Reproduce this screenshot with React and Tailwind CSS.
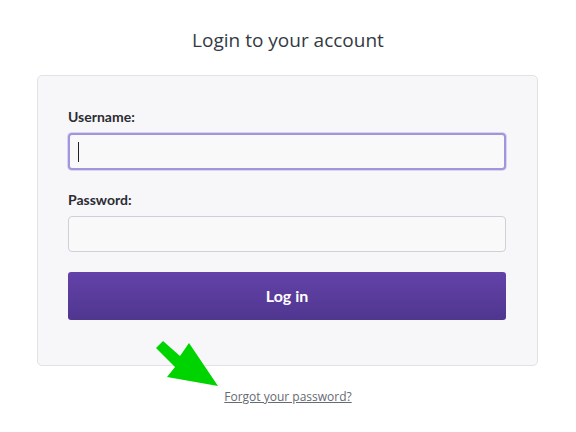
export default function App() {
  return (
    <div className="min-h-screen bg-white relative">
      <div className="pt-[26px] text-center text-[19px] leading-[28px] text-[#333a44]" style={{ fontFamily: '"Open Sans", sans-serif' }}>
        Login to your account
      </div>
      <div className="ml-[37px] mt-[21px] w-[501px] h-[291px] rounded-[5px] border border-[#e2e2e6] bg-[#f7f7f9] pl-[30px] pr-[31px] pt-[31px]" style={{ fontFamily: 'Lato, sans-serif' }}>
        <div className="text-[14px] font-bold leading-[20px] text-[#2b2b33]">Username:</div>
        <div className="mt-[6px] h-[37px] rounded-[4px] border-2 border-[#a096db] bg-[#f9f9fa] shadow-[0_0_0_1px_#d9d4f2] flex items-center pl-[8px]">
          <div className="w-px h-[20px] bg-[#222]" />
        </div>
        <div className="mt-[20px] text-[14px] font-bold leading-[20px] text-[#2b2b33]">Password:</div>
        <div className="mt-[6px] h-[36px] rounded-[4px] border border-[#cfd0d7] bg-[#f9f9fa]" />
        <button className="mt-[20px] w-full h-[48px] rounded-[3px] bg-gradient-to-b from-[#6442a9] to-[#4f368f] text-white text-[16px] font-bold">
          Log in
        </button>
      </div>
      <div className="mt-[23px] text-center text-[12px] leading-[16px]" style={{ fontFamily: '"Open Sans", sans-serif' }}>
        <a className="text-[#666a72] underline">Forgot your password?</a>
      </div>
      <svg className="absolute left-0 top-0" width="576" height="432" style={{ pointerEvents: 'none' }}>
        <polygon points="163,341 180,356 189,343 218,386 167,377 175,367 156,348" fill="#00d400" />
      </svg>
    </div>
  );
}
